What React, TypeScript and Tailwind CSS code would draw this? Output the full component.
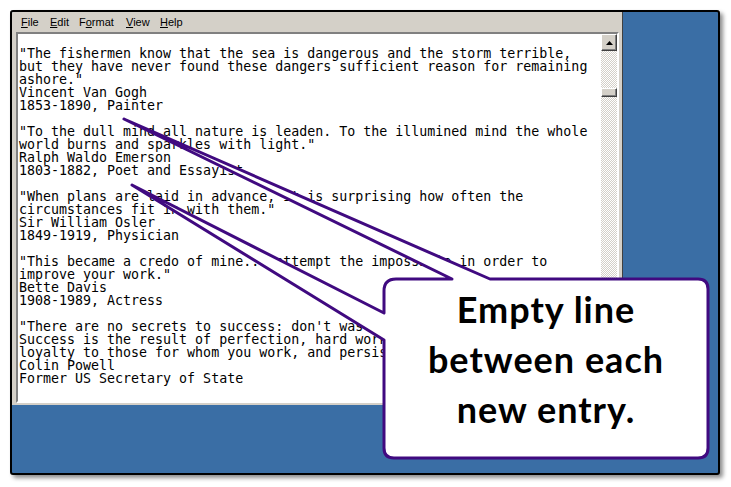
import React from 'react'

const quotes = [
  '',
  '"The fishermen know that the sea is dangerous and the storm terrible,',
  'but they have never found these dangers sufficient reason for remaining',
  'ashore."',
  'Vincent Van Gogh',
  '1853-1890, Painter',
  '',
  '"To the dull mind all nature is leaden. To the illumined mind the whole',
  'world burns and sparkles with light."',
  'Ralph Waldo Emerson',
  '1803-1882, Poet and Essayist',
  '',
  '"When plans are laid in advance, it is surprising how often the',
  'circumstances fit in with them."',
  'Sir William Osler',
  '1849-1919, Physician',
  '',
  '"This became a credo of mine... attempt the impossible in order to',
  'improve your work."',
  'Bette Davis',
  '1908-1989, Actress',
  '',
  '"There are no secrets to success: don\'t waste time looking for them.',
  'Success is the result of perfection, hard work, learning from failure,',
  'loyalty to those for whom you work, and persistence."',
  'Colin Powell',
  'Former US Secretary of State',
]

function MenuItem({ w, pre, hot, post }: { w: string; pre: string; hot: string; post: string }) {
  return (
    <span className={w}>
      {pre}
      <span className="underline underline-offset-1">{hot}</span>
      {post}
    </span>
  )
}

function Scrollbar() {
  return (
    <div className="flex w-[16px] flex-col">
      {/* up arrow */}
      <div className="flex h-[17px] items-center justify-center border border-t-white border-l-white border-r-[#404040] border-b-[#404040] bg-[#d4d0c8] shadow-[inset_-1px_-1px_#808080]">
        <svg width="7" height="4" viewBox="0 0 7 4">
          <path d="M3.5 0 L7 4 L0 4 Z" fill="#000" />
        </svg>
      </div>
      <div className="flex-1 bg-[repeating-conic-gradient(#d4d0c8_0%_25%,#ffffff_0%_50%)] bg-[length:2px_2px]">
        <div className="mt-[37px] h-[9px] border border-t-white border-l-white border-r-[#404040] border-b-[#404040] bg-[#d4d0c8] shadow-[inset_-1px_-1px_#808080]" />
      </div>
    </div>
  )
}

export default function App() {
  return (
    <div className="relative h-[487px] w-[731px] bg-white pl-[10px] pt-[10px]">
      {/* framed screenshot */}
      <div className="h-[465px] w-[710px] overflow-hidden rounded-[3px] border-2 border-black bg-[#3a6ea5] shadow-[3px_3px_4px_rgba(0,0,0,0.45)]">
        <div className="flex h-[393px] w-[611px] flex-col border-r border-[#404040] bg-[#d4d0c8]">
          {/* menu bar */}
          <div className="flex h-[20px] items-center pl-[9px] font-['Liberation_Sans',Arial,sans-serif] text-[11px] text-black">
            <MenuItem w="w-[29px]" pre="" hot="F" post="ile" />
            <MenuItem w="w-[29px]" pre="" hot="E" post="dit" />
            <MenuItem w="w-[47px]" pre="F" hot="o" post="rmat" />
            <MenuItem w="w-[34px]" pre="" hot="V" post="iew" />
            <MenuItem w="w-[30px]" pre="" hot="H" post="elp" />
          </div>

          {/* edit area */}
          <div className="mb-[2px] ml-[4px] mr-[3px] flex flex-1 border-2 border-t-[#808080] border-l-[#808080] border-r-white border-b-white bg-white">
            <div className="flex-1 overflow-hidden pl-[1px] font-['DejaVu_Sans_Mono',monospace] text-[13.3px] leading-[13px] text-black whitespace-pre">
              {quotes.map((line, i) => (
                <div key={i} className="h-[13px]">
                  {line}
                </div>
              ))}
            </div>
            <Scrollbar />
          </div>
        </div>
      </div>

      {/* callout with two pointers */}
      <svg className="pointer-events-none absolute left-0 top-0" width="731" height="487" viewBox="0 0 731 487">
        <path
          d="M124 119 L490 279 L698 279 Q708 279 708 289 L708 448 Q708 458 698 458 L394 458 Q384 458 384 448 L384 340 L132 185 L384 313 L384 291 Q384 279 396 279 L452 279 Z"
          fill="#ffffff"
          stroke="#400a80"
          strokeWidth="3"
          strokeLinejoin="round"
        />
      </svg>
      <div className="absolute left-[384px] top-[279px] flex h-[179px] w-[324px] flex-col items-center pt-[5px] font-['Comic_Sans_MS',Lato,sans-serif] text-[36px] font-bold leading-[50px] tracking-[1px] text-black">
        <span>Empty line</span>
        <span>between each</span>
        <span>new entry.</span>
      </div>
    </div>
  )
}
